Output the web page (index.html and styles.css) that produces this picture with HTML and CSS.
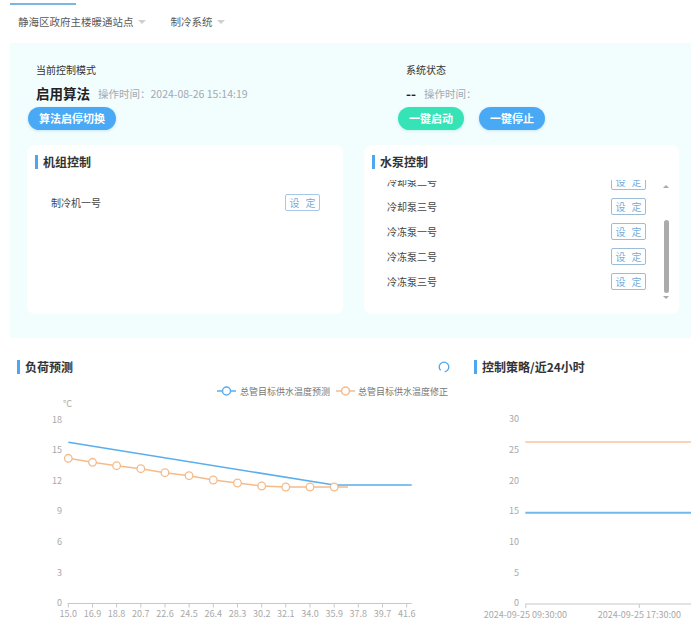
FILE: index.html
```html
<!DOCTYPE html>
<html lang="zh">
<head>
<meta charset="utf-8">
<title>制冷系统</title>
<link rel="stylesheet" href="styles.css">
</head>
<body>
<div class="page">
  <div class="tabs"><span class="tab-ink"></span></div>
  <div class="filters">
    <div class="select">静海区政府主楼暖通站点<span class="caret"></span></div>
    <div class="select">制冷系统<span class="caret"></span></div>
  </div>

  <section class="control">
    <div class="modes">
      <div class="mode mode-left">
        <div class="mode-label">当前控制模式</div>
        <div class="mode-value"><b>启用算法</b><span class="op-time">操作时间：2024-08-26 15:14:19</span></div>
        <div class="btns"><button class="btn btn-blue">算法启停切换</button></div>
      </div>
      <div class="mode">
        <div class="mode-label">系统状态</div>
        <div class="mode-value"><b>--</b><span class="op-time">操作时间：</span></div>
        <div class="btns"><button class="btn btn-green">一键启动</button><button class="btn btn-blue">一键停止</button></div>
      </div>
    </div>

    <div class="cards">
      <div class="card card-left">
        <h3 class="title">机组控制</h3>
        <div class="unit-list">
          <div class="row"><span>制冷机一号</span><button class="set">设 定</button></div>
        </div>
      </div>
      <div class="card card-right">
        <h3 class="title">水泵控制</h3>
        <div class="pump-body">
          <div class="pump-clip">
            <div class="pump-list">
              <div class="row"><span>冷却泵二号</span><button class="set">设 定</button></div>
              <div class="row"><span>冷却泵三号</span><button class="set">设 定</button></div>
              <div class="row"><span>冷冻泵一号</span><button class="set">设 定</button></div>
              <div class="row"><span>冷冻泵二号</span><button class="set">设 定</button></div>
              <div class="row"><span>冷冻泵三号</span><button class="set">设 定</button></div>
            </div>
          </div>
          <div class="vscroll">
            <span class="arr arr-up"></span>
            <div class="track"><span class="thumb"></span></div>
            <span class="arr arr-down"></span>
          </div>
        </div>
      </div>
    </div>
  </section>

  <div class="bottom">
    <section class="chart-panel chart-left">
      <div class="head">
        <h3 class="title">负荷预测</h3>
        <svg class="spinner" width="12" height="12" viewBox="0 0 12 12">
          <circle cx="6" cy="6" r="4.8" fill="none" stroke="#4ea6f0" stroke-width="1.3" stroke-dasharray="25 5.2" transform="rotate(-225 6 6)"/>
        </svg>
      </div>
      <svg class="chart" width="450" height="259" viewBox="0 0 450 259">
        <g class="legend">
          <line x1="207" y1="13" x2="226" y2="13" stroke="#5aaeee" stroke-width="1.5"/>
          <circle cx="216.5" cy="13" r="4" fill="#fff" stroke="#5aaeee" stroke-width="1.5"/>
          <text x="230" y="13" class="lg">总管目标供水温度预测</text>
          <line x1="326" y1="13" x2="345" y2="13" stroke="#f5bb8a" stroke-width="1.5"/>
          <circle cx="335.5" cy="13" r="4" fill="#fff" stroke="#f5bb8a" stroke-width="1.5"/>
          <text x="348" y="13" class="lg">总管目标供水温度修正</text>
        </g>
        <text x="53" y="25" class="ax">°C</text>
        <g class="ax yl">
          <text x="52" y="41">18</text>
          <text x="52" y="71.5">15</text>
          <text x="52" y="102">12</text>
          <text x="52" y="132.7">9</text>
          <text x="52" y="163.3">6</text>
          <text x="52" y="194">3</text>
          <text x="52" y="224.7">0</text>
        </g>
        <line x1="57.7" y1="225.5" x2="401.7" y2="225.5" stroke="#c8c8c8" stroke-width="1"/>
        <g stroke="#c8c8c8" stroke-width="1">
          <line x1="58.3" y1="225.5" x2="58.3" y2="229.5"/>
          <line x1="82.5" y1="225.5" x2="82.5" y2="229.5"/>
          <line x1="106.6" y1="225.5" x2="106.6" y2="229.5"/>
          <line x1="130.8" y1="225.5" x2="130.8" y2="229.5"/>
          <line x1="155" y1="225.5" x2="155" y2="229.5"/>
          <line x1="179.1" y1="225.5" x2="179.1" y2="229.5"/>
          <line x1="203.3" y1="225.5" x2="203.3" y2="229.5"/>
          <line x1="227.5" y1="225.5" x2="227.5" y2="229.5"/>
          <line x1="251.7" y1="225.5" x2="251.7" y2="229.5"/>
          <line x1="275.8" y1="225.5" x2="275.8" y2="229.5"/>
          <line x1="300" y1="225.5" x2="300" y2="229.5"/>
          <line x1="324.2" y1="225.5" x2="324.2" y2="229.5"/>
          <line x1="348.3" y1="225.5" x2="348.3" y2="229.5"/>
          <line x1="372.5" y1="225.5" x2="372.5" y2="229.5"/>
          <line x1="396.7" y1="225.5" x2="396.7" y2="229.5"/>
        </g>
        <g class="ax xl">
          <text x="58.3" y="235.5">15.0</text>
          <text x="82.5" y="235.5">16.9</text>
          <text x="106.6" y="235.5">18.8</text>
          <text x="130.8" y="235.5">20.7</text>
          <text x="155" y="235.5">22.6</text>
          <text x="179.1" y="235.5">24.5</text>
          <text x="203.3" y="235.5">26.4</text>
          <text x="227.5" y="235.5">28.3</text>
          <text x="251.7" y="235.5">30.2</text>
          <text x="275.8" y="235.5">32.1</text>
          <text x="300" y="235.5">34.0</text>
          <text x="324.2" y="235.5">35.9</text>
          <text x="348.3" y="235.5">37.8</text>
          <text x="372.5" y="235.5">39.7</text>
          <text x="396.7" y="235.5">41.6</text>
        </g>
        <polyline points="58.3,80.3 82.5,84.3 106.6,87.7 130.8,90.7 155,94.7 179.1,97.7 203.3,102 227.5,105 251.7,108 275.8,109 300,109 324.2,109 338,109" fill="none" stroke="#f5bb8a" stroke-width="1.5"/>
        <polyline points="58.3,64.3 324.2,107 401.7,107" fill="none" stroke="#5aaeee" stroke-width="1.5"/>
        <g fill="#fff" stroke="#f5bb8a" stroke-width="1.3">
          <circle cx="58.3" cy="80.3" r="3.8"/>
          <circle cx="82.5" cy="84.3" r="3.8"/>
          <circle cx="106.6" cy="87.7" r="3.8"/>
          <circle cx="130.8" cy="90.7" r="3.8"/>
          <circle cx="155" cy="94.7" r="3.8"/>
          <circle cx="179.1" cy="97.7" r="3.8"/>
          <circle cx="203.3" cy="102" r="3.8"/>
          <circle cx="227.5" cy="105" r="3.8"/>
          <circle cx="251.7" cy="108" r="3.8"/>
          <circle cx="275.8" cy="109" r="3.8"/>
          <circle cx="300" cy="109" r="3.8"/>
          <circle cx="324.2" cy="109" r="3.8"/>
        </g>
      </svg>
    </section>

    <section class="chart-panel chart-right">
      <div class="head">
        <h3 class="title">控制策略/近24小时</h3>
      </div>
      <svg class="chart" width="231" height="259" viewBox="0 0 231 259">
        <g class="ax yl">
          <text x="59" y="40.7">30</text>
          <text x="59" y="71.3">25</text>
          <text x="59" y="102">20</text>
          <text x="59" y="132.7">15</text>
          <text x="59" y="163.3">10</text>
          <text x="59" y="194.3">5</text>
          <text x="59" y="224.5">0</text>
        </g>
        <line x1="65.3" y1="226" x2="231" y2="226" stroke="#c8c8c8" stroke-width="1"/>
        <line x1="65.8" y1="226" x2="65.8" y2="230" stroke="#c8c8c8" stroke-width="1"/>
        <line x1="179.3" y1="226" x2="179.3" y2="230" stroke="#c8c8c8" stroke-width="1"/>
        <g class="ax xl">
          <text x="65.3" y="236.5">2024-09-25 09:30:00</text>
          <text x="179.3" y="236.5">2024-09-25 17:30:00</text>
        </g>
        <line x1="65.3" y1="64" x2="231" y2="64" stroke="#f4c4a0" stroke-width="1.3"/>
        <line x1="65.3" y1="134.7" x2="231" y2="134.7" stroke="#6fb8f0" stroke-width="2"/>
      </svg>
    </section>
  </div>
</div>
</body>
</html>
```

FILE: styles.css
```css
* { box-sizing: border-box; }

html, body {
  margin: 0;
  padding: 0;
  background: #fff;
}

body {
  font-family: "Noto Sans CJK SC", "Liberation Sans", sans-serif;
  color: #333;
  overflow: hidden;
}

.page {
  width: 691px;
}

.tabs {
  height: 8px;
  padding-top: 3px;
}

.tab-ink {
  display: block;
  margin-left: 10px;
  width: 66px;
  height: 2px;
  background: #7ab6e3;
}

.filters {
  height: 28px;
  display: flex;
  align-items: center;
  padding-left: 18px;
  gap: 25px;
  margin-bottom: 7px;
}

.select {
  display: flex;
  align-items: center;
  font-size: 10.5px;
  line-height: 14px;
  color: #5a5a5a;
}

.caret {
  display: block;
  margin-left: 4px;
  width: 0;
  height: 0;
  border-left: 4px solid transparent;
  border-right: 4px solid transparent;
  border-top: 4px solid #cfcfcf;
}

/* control panel */
.control {
  margin-left: 10px;
  background: #f2fdfe;
  padding: 20px 12px 24px 17px;
}

.modes {
  display: flex;
  padding-left: 1px;
}

.mode-left {
  width: 370px;
}

.mode-label {
  padding-left: 8px;
  font-size: 10px;
  line-height: 14px;
  color: #333;
}

.mode-value {
  margin-top: 6px;
  padding-left: 8px;
  height: 20px;
  display: flex;
  align-items: center;
}

.mode-value b {
  font-size: 13.5px;
  font-weight: bold;
  color: #222;
}

.op-time {
  margin-left: 8px;
  font-size: 10.5px;
  color: #a3a9b1;
}

.btns {
  margin-top: 4px;
  display: flex;
  gap: 15px;
}

.btn {
  height: 23px;
  border: none;
  border-radius: 12px;
  padding: 0 11px;
  font-family: inherit;
  font-size: 11px;
  font-weight: bold;
  line-height: 23px;
  color: #fff;
  box-shadow: 0 1px 3px rgba(80, 160, 220, 0.25);
}

.btn-blue {
  background: #4aa9f4;
}

.btn-green {
  background: #35e3b7;
  box-shadow: 0 1px 3px rgba(50, 210, 170, 0.25);
}

.cards {
  margin-top: 15px;
  display: flex;
  gap: 21px;
}

.card {
  height: 169px;
  background: #fff;
  border-radius: 8px;
  padding: 10px 8px 10px;
}

.card-left { width: 316px; }
.card-right { width: 315px; }

.title {
  margin: 0;
  font-size: 12px;
  line-height: 14px;
  font-weight: bold;
  color: #333;
  border-left: 3px solid #4ea6f0;
  padding-left: 5px;
  white-space: nowrap;
}

.row {
  height: 25px;
  display: flex;
  align-items: center;
  justify-content: space-between;
  font-size: 10px;
  color: #444;
}

.unit-list {
  margin-top: 21px;
}

.unit-list .row {
  padding-left: 16px;
  padding-right: 15px;
}

.set {
  width: 35px;
  height: 17px;
  padding: 0 0 0 2px;
  border: 1px solid #a6c8e4;
  border-radius: 2px;
  background: #fff;
  font-family: inherit;
  font-size: 10px;
  line-height: 15px;
  letter-spacing: 2px;
  color: #72acd9;
}

.pump-body {
  margin-top: 11px;
  height: 124px;
  display: flex;
}

.pump-clip {
  flex: 1;
  overflow: hidden;
  padding-right: 15px;
}

.pump-list {
  margin-top: -11px;
}

.pump-list .row {
  padding-left: 15px;
}

.pump-list .set {
  border-color: #9dbcd6;
}

.vscroll {
  width: 10px;
  display: flex;
  flex-direction: column;
  align-items: center;
}

.arr {
  display: block;
  width: 0;
  height: 0;
  border-left: 3px solid transparent;
  border-right: 3px solid transparent;
}

.arr-up {
  margin-top: 5px;
  border-bottom: 3px solid #a8a8a8;
}

.arr-down {
  margin-bottom: 5px;
  border-top: 3px solid #a8a8a8;
}

.track {
  flex: 1;
  width: 100%;
  display: flex;
  justify-content: center;
}

.thumb {
  display: block;
  margin-top: 32px;
  width: 5px;
  height: 73px;
  border-radius: 3px;
  background: #ababab;
}

/* bottom charts */
.bottom {
  display: flex;
}

.chart-panel .head {
  margin-top: 22px;
  height: 14px;
  display: flex;
  align-items: center;
  justify-content: space-between;
  margin-bottom: 4px;
}

.chart-left {
  margin-left: 10px;
  width: 450px;
}

.chart-left .head {
  padding-left: 7px;
  padding-right: 10px;
}

.chart-right {
  width: 231px;
}

.chart-right .head {
  padding-left: 14px;
}

.chart {
  display: block;
}

.spinner {
  display: block;
}

.chart text {
  font-family: "Noto Sans CJK SC", "Liberation Sans", sans-serif;
  font-size: 9px;
  dominant-baseline: central;
}

.chart .lg {
  fill: #777;
}

.chart .ax text,
.chart text.ax {
  fill: #a9a9a9;
}

.yl text {
  text-anchor: end;
}

.xl text {
  text-anchor: middle;
}
```
